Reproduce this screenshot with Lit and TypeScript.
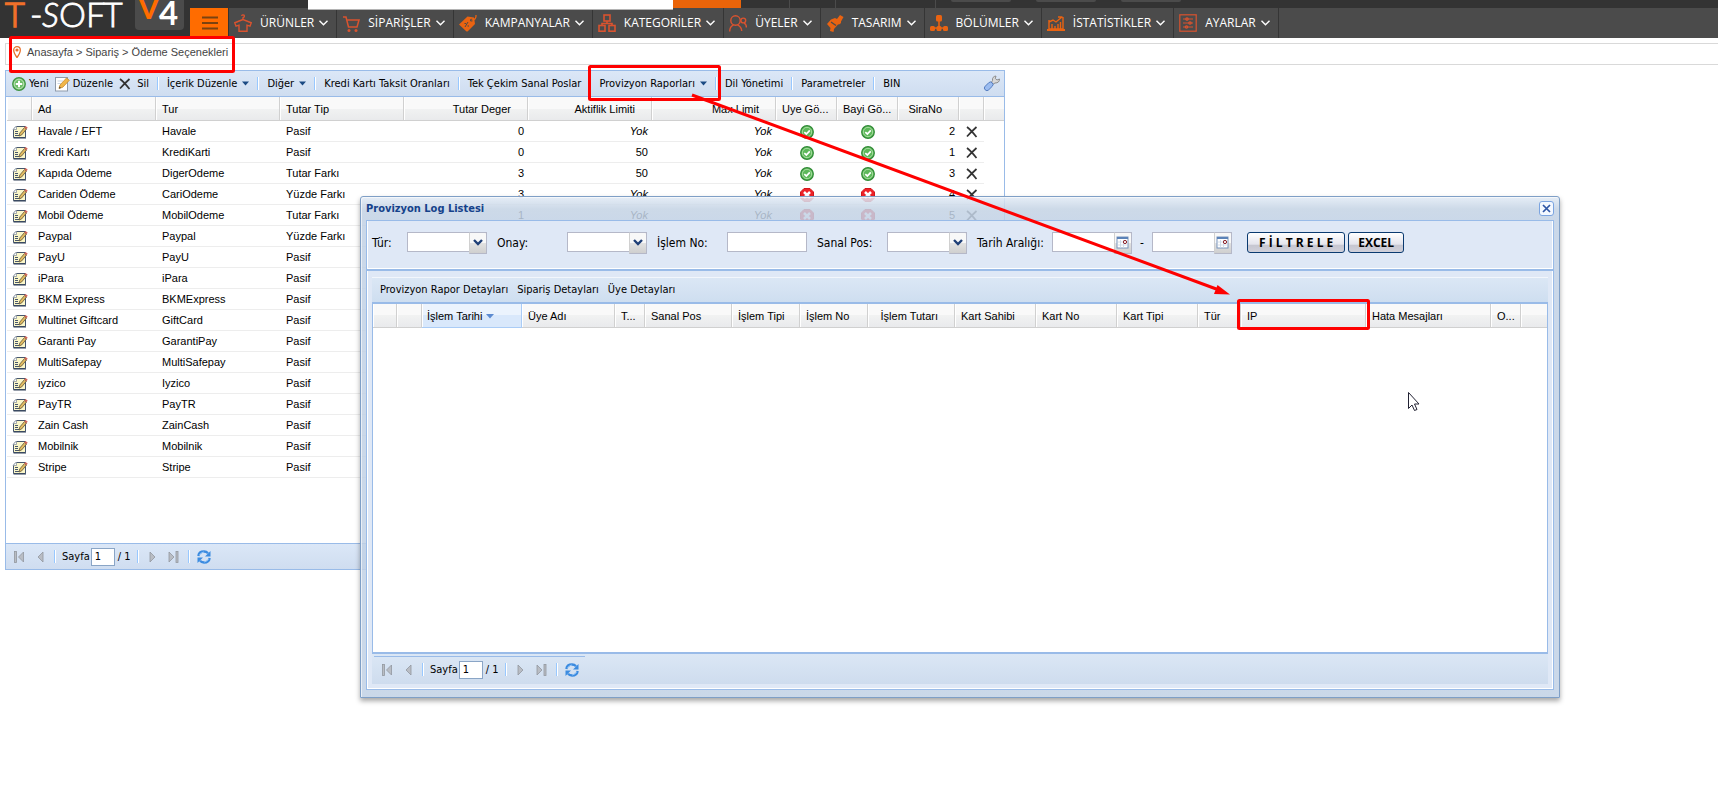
import { LitElement, html, svg, css, nothing } from "lit";
import { customElement } from "lit/decorators.js";

type Row = {
  name: string;
  kind: string;
  fee: string;
  amount?: string;
  minLimit?: string;
  maxLimit?: string;
  visible?: boolean;
  order?: number;
};

const PASSIVE = "Pasif";

const ROWS: Row[] = [
  { name: "Havale / EFT", kind: "Havale", fee: PASSIVE, amount: "0", minLimit: "Yok", maxLimit: "Yok", visible: true, order: 2 },
  { name: "Kredi Kartı", kind: "KrediKarti", fee: PASSIVE, amount: "0", minLimit: "50", maxLimit: "Yok", visible: true, order: 1 },
  { name: "Kapıda Ödeme", kind: "DigerOdeme", fee: "Tutar Farkı", amount: "3", minLimit: "50", maxLimit: "Yok", visible: true, order: 3 },
  { name: "Cariden Ödeme", kind: "CariOdeme", fee: "Yüzde Farkı", amount: "3", minLimit: "Yok", maxLimit: "Yok", visible: false, order: 4 },
  { name: "Mobil Ödeme", kind: "MobilOdeme", fee: "Tutar Farkı", amount: "1", minLimit: "Yok", maxLimit: "Yok", visible: false, order: 5 },
  { name: "Paypal", kind: "Paypal", fee: "Yüzde Farkı" },
  { name: "PayU", kind: "PayU", fee: PASSIVE },
  { name: "iPara", kind: "iPara", fee: PASSIVE },
  { name: "BKM Express", kind: "BKMExpress", fee: PASSIVE },
  { name: "Multinet Giftcard", kind: "GiftCard", fee: PASSIVE },
  { name: "Garanti Pay", kind: "GarantiPay", fee: PASSIVE },
  { name: "MultiSafepay", kind: "MultiSafepay", fee: PASSIVE },
  { name: "iyzico", kind: "Iyzico", fee: PASSIVE },
  { name: "PayTR", kind: "PayTR", fee: PASSIVE },
  { name: "Zain Cash", kind: "ZainCash", fee: PASSIVE },
  { name: "Mobilnik", kind: "Mobilnik", fee: PASSIVE },
  { name: "Stripe", kind: "Stripe", fee: PASSIVE },
];

const LOG_COLUMNS: { label: string; width: number; right?: boolean; sorted?: boolean }[] = [
  { label: "", width: 24 },
  { label: "", width: 25 },
  { label: "İşlem Tarihi", width: 100, sorted: true },
  { label: "Üye Adı", width: 93 },
  { label: "T...", width: 30 },
  { label: "Sanal Pos", width: 87 },
  { label: "İşlem Tipi", width: 68 },
  { label: "İşlem No", width: 68 },
  { label: "İşlem Tutarı", width: 87, right: true },
  { label: "Kart Sahibi", width: 81 },
  { label: "Kart No", width: 81 },
  { label: "Kart Tipi", width: 81 },
  { label: "Tür", width: 43 },
  { label: "IP", width: 125 },
  { label: "Hata Mesajları", width: 125 },
  { label: "O...", width: 30 },
];

const O = "#ea6311";
const R = "#d9532f";

const navIcons = {
  shirt: svg`<g fill="none" stroke=${R} stroke-width="1.4"><path d="M9 6V3.800Q11 3 10 1.200Q8.500.3 7.500 1.800"/><path d="M9 5.500L.8 8.800L2 12.200L5 11.200V17.300H13V11.200L16 12.200L17.200 8.800Z"/></g>`,
  cart: svg`<g fill="none" stroke=${R} stroke-width="1.5"><path d="M1 3 H4 L6.500 13 H15 L17 6 H5.500"/></g><circle cx="7" cy="16.500" r="1.500" fill=${R}/><circle cx="14" cy="16.500" r="1.500" fill=${R}/>`,
  tag: svg`<path fill=${O} d="M0 10.500L8.500 2.500L15 3.500L16 10L9 17Q8 18 7 17Z"/><circle cx="12.500" cy="6.200" r="1.400" fill="#4b4b4b"/><path d="M12.500 6.200Q17.500 6 17 1" stroke=${O} stroke-width="1.300" fill="none"/><path d="M6 13 L9 8 M5.500 9.500h1.500M8.500 12h1.500" stroke="#4b4b4b"/>`,
  boxes: svg`<g fill="none" stroke=${R} stroke-width="1.600"><rect x="6" y="1" width="6" height="6"/><rect x="1" y="11.500" width="6" height="5.700"/><rect x="11" y="11.500" width="6" height="5.700"/><path d="M9 7V9.500M4 11.500V9.500H14V11.500"/></g>`,
  users: svg`<g fill="none" stroke=${R} stroke-width="1.400"><circle cx="6.500" cy="6.500" r="4.700"/><path d="M.7 17.500Q.7 12.500 4.500 10.800M8.500 10.800Q12.500 12.500 12.700 17"/><circle cx="14.300" cy="6.500" r="2.400"/><path d="M15 9Q17.400 10 17.400 13.500"/></g>`,
  brush: svg`<path fill=${O} d="M11 5 L14 1 L17.500 3 L15 7.500 Q15.500 10 12 10.500 L8 15 L7.500 18 L4 17 L4.500 14 L1 10 L5 5.500 L9 4Z"/><path d="M5 8 L10 11.500" stroke="#4b4b4b" stroke-width="1.300"/>`,
  tree: svg`<g fill=${O}><rect x="6" y="1" width="6" height="6.500" rx="1.500"/><rect x="8.200" y="7" width="1.600" height="7"/><rect x="2" y="13.300" width="14" height="1.500"/><rect x="0" y="12" width="5" height="5" rx="1.500"/><rect x="6.500" y="12" width="5" height="5" rx="1.500"/><rect x="13" y="12" width="5" height="5" rx="1.500"/></g>`,
  chart: svg`<g fill="none" stroke=${O} stroke-width="1.400"><path d="M2 6 V15 H16 V3 M2 8 L6 6 L9 8 L15 3 M11 3H15.500"/><path d="M5 15V10M8 15V12M11 15V10M13.500 15V8"/></g><rect x="0" y="15" width="18" height="2" fill=${O}/>`,
  sliders: svg`<g fill="none" stroke=${R} stroke-width="1.200"><rect x=".8" y=".8" width="16.400" height="16.400"/><path d="M4 5H14M4 9H14M4 13H14"/><circle cx="8" cy="5" r="1.200"/><circle cx="11" cy="9" r="1.200"/><circle cx="7.500" cy="13" r="1.200"/></g>`,
};

const NAV: [keyof typeof navIcons, string][] = [
  ["shirt", "ÜRÜNLER"],
  ["cart", "SİPARİŞLER"],
  ["tag", "KAMPANYALAR"],
  ["boxes", "KATEGORİLER"],
  ["users", "ÜYELER"],
  ["brush", "TASARIM"],
  ["tree", "BÖLÜMLER"],
  ["chart", "İSTATİSTİKLER"],
  ["sliders", "AYARLAR"],
];

const editIcon = html`<svg width="16" height="14" viewBox="0 0 16 14"><path d="M4 1.500H13.500V12.500H1.500V4.500Z" fill="#fbf7c8" stroke="#46566e"/><path d="M1.500 13H14" stroke="#2f3e57"/><path d="M1 4.500L4.500 1V4.500Z" fill="#fff" stroke="#7d8896" stroke-width=".7"/><path d="M3 6.500H6M3 8.500H6M3 10.500H7" stroke="#46566e"/><path d="M7 11L7.800 8L12.500 2.500L14.500 4L9.700 9.900Z" fill="#e3bd62" stroke="#5d5238" stroke-width=".8"/><path d="M12.200 2.500L13.500 1L15.700 2.600L14.500 4.200Z" fill="#d0685c"/></svg>`;
const okIcon = html`<svg width="14" height="14" viewBox="0 0 14 14"><circle cx="7" cy="7" r="6.300" fill="#5db85a" stroke="#2f8a35" stroke-width="1.200"/><circle cx="7" cy="7" r="4.700" fill="none" stroke="#a7dda0"/><path d="M4.300 7.200L6.300 9L9.800 5.300" fill="none" stroke="#fff" stroke-width="1.700"/></svg>`;
const noIcon = html`<svg width="14" height="14" viewBox="0 0 14 14"><path d="M4 .5H10L13.500 4V10L10 13.500H4L.5 10V4Z" fill="#ee2228" stroke="#d3161a"/><path d="M4 4L10 10M10 4L4 10" stroke="#fff" stroke-width="2.500"/></svg>`;
const crossIcon = html`<svg width="12" height="12" viewBox="0 0 12 12"><path d="M1 1Q5 4 10.500 11M10.500 1Q6 5 1 10.500" fill="none" stroke="#333" stroke-width="1.700"/></svg>`;
const addIcon = html`<svg width="14" height="14" viewBox="0 0 14 14"><circle cx="7" cy="7" r="6.300" fill="#6fbf6a" stroke="#3f9442" stroke-width="1.200"/><circle cx="7" cy="7" r="4.800" fill="none" stroke="#bfe5ba"/><path d="M7 3.800V10.200M3.800 7H10.200" stroke="#fff" stroke-width="2"/></svg>`;
const noteIcon = html`<svg width="15" height="16" viewBox="0 0 15 16"><rect x=".5" y="1.500" width="12" height="13.500" fill="#fff" stroke="#8f9bab"/><path d="M2.500 5H8M2.500 7.500H6" stroke="#c9d4e2"/><path d="M4 12.500L5 9L11.500 2L14.300 4.300L7.800 11.200Z" fill="#f0b64a" stroke="#c98a2a" stroke-width=".8"/><path d="M4 12.500L4.500 10.600L6 12Z" fill="#444"/></svg>`;
const wrenchIcon = html`<svg width="17" height="17" viewBox="0 0 17 17"><path d="M8 8L9.500 5.500Q9 1.500 13 1L12.300 3.500L14 5L16.500 4Q16.500 8 12 8L9.500 9.500Z" fill="#d8d8d8" stroke="#858585" stroke-width=".9"/><rect x="-5" y="-2.500" width="10" height="5" rx="2.500" transform="translate(5.700 11.300) rotate(-45)" fill="#9bbcf0" stroke="#4f78bd" stroke-width=".9"/></svg>`;
const refreshIcon = html`<svg width="16" height="16" viewBox="0 0 16 16"><path d="M2.300 7Q3 2.500 8 2.500Q10.500 2.500 12 4.200" fill="none" stroke="#3b8be0" stroke-width="2.300"/><path d="M14.500 2V7.500H9Z" fill="#3b8be0"/><path d="M13.700 9Q13 13.500 8 13.500Q5.500 13.500 4 11.800" fill="none" stroke="#3b8be0" stroke-width="2.300"/><path d="M1.500 14V8.500H7Z" fill="#3b8be0"/><path d="M3.500 6Q5 3.200 8 3M12.500 10Q11 12.800 8 13" fill="none" stroke="#a9d2fb" stroke-width=".8"/></svg>`;
const arrowGlyph = (shape: "first" | "prev" | "next" | "last") => {
  const forward = shape === "next" || shape === "last";
  const bar = shape === "first" || shape === "last";
  return html`<svg width="16" height="14" viewBox="0 0 16 14">
    <g fill="#b9bdc4" stroke="#92979f" stroke-width=".8">
      ${forward
        ? svg`<path d=${bar ? "M3 2V12L8 7Z" : "M5 2V12L10 7Z"} />`
        : svg`<path d=${bar ? "M12.500 2V12L7.500 7Z" : "M11 2V12L6 7Z"} />`}
      ${bar ? svg`<rect x=${forward ? 10 : 3.5} y="1.500" width="2" height="11" />` : nothing}
    </g>
  </svg>`;
};
const caret = html`<svg class="caret" width="7" height="5" viewBox="0 0 7 5"><path d="M0 .5H7L3.500 4.500Z" fill="#1b4a83" /></svg>`;

const controls = css`
  * {
    box-sizing: border-box;
  }
  button,
  input,
  select {
    margin: 0;
    font: inherit;
    color: inherit;
  }
  svg {
    display: block;
    flex: none;
  }
`;

const gridStyles = css`
  table {
    width: 100%;
    table-layout: fixed;
    border-collapse: separate;
    border-spacing: 0;
    font: 11px/14px "Liberation Sans", Arial, sans-serif;
    color: #000;
  }
  th {
    height: 24px;
    padding: 0 0 0 6px;
    font-weight: normal;
    text-align: left;
    white-space: nowrap;
    background: linear-gradient(#f9f9f9 0 50%, #f1f2f2 50%, #e9eaec);
    border-right: 1px solid #d0d0d0;
    border-bottom: 1px solid #d0d0d0;
    box-shadow: inset 1px 0 #fff;
  }
  th:last-child {
    border-right: 0;
  }
  th.num {
    padding: 0 16px 0 0;
    text-align: right;
  }
`;

@customElement("page-bar")
class PageBar extends LitElement {
  static styles = [
    controls,
    css`
      :host {
        display: flex;
        align-items: center;
        gap: 5px;
        padding-left: 5px;
        font: 11px/14px "DejaVu Sans Condensed", Tahoma, sans-serif;
        color: #000;
      }
      button {
        padding: 0;
        border: 0;
        background: none;
      }
      .sep {
        width: 2px;
        height: 13px;
        margin: 0 1px;
        border-left: 1px solid #98c8ff;
        border-right: 1px solid #fff;
      }
      label {
        display: flex;
        align-items: center;
        gap: 1px;
      }
      input {
        width: 24px;
        height: 18px;
        padding: 0 3px;
        border: 1px solid #8aa5c6;
        background: #fff;
      }
      .total {
        padding: 0 0 0 2px;
      }
    `,
  ];
  render() {
    return html`
      <button aria-label="İlk">${arrowGlyph("first")}</button>
      <button aria-label="Önceki">${arrowGlyph("prev")}</button>
      <span class="sep"></span>
      <label>Sayfa <input value="1" /><span class="total">/ 1</span></label>
      <span class="sep"></span>
      <button aria-label="Sonraki">${arrowGlyph("next")}</button>
      <button aria-label="Son">${arrowGlyph("last")}</button>
      <span class="sep"></span>
      <button aria-label="Yenile">${refreshIcon}</button>
    `;
  }
}

@customElement("site-header")
class SiteHeader extends LitElement {
  static styles = [
    controls,
    css`
      :host {
        display: flex;
        height: 38px;
        background: #333;
        color: #fff;
        font: 12px/16px "Open Sans", sans-serif;
      }
      .logo {
        flex: none;
        width: 190px;
      }
      .main {
        flex: 1;
        min-width: 0;
      }
      .strip {
        display: flex;
        height: 8px;
        align-items: flex-start;
      }
      .search {
        width: 365px;
        height: 10px;
        margin-left: 118px;
        padding: 0;
        border: 0;
        border-bottom: 1px solid #b4b4b4;
        background: #fff;
        position: relative;
        border-radius: 0;
      }
      .go {
        width: 68px;
        height: 8px;
        padding: 0;
        border: 0;
        background: #ea6409;
      }
      .cell {
        height: 8px;
        border-right: 1px solid #4b4b4b;
      }
      .cell.a {
        width: 49px;
      }
      .cell.b {
        width: 46px;
      }
      .cell.c {
        width: 100px;
      }
      .pill {
        width: 60px;
        height: 2px;
        margin-left: 15px;
        margin-right: 10px;
        border-radius: 0 0 3px 3px;
        background: #4b4b4b;
      }
      nav {
        display: flex;
        height: 30px;
        background: #4b4b4b;
      }
      .menu {
        width: 39px;
        height: 30px;
        padding: 2px 10px 0 12px;
        border: 0;
        border-right: 1px solid #333;
        border-bottom: 2px solid #333;
        background: #ff6c00;
      }
      .item {
        display: flex;
        align-items: center;
        padding: 0 8px 0 5px;
        border-right: 1px solid #353535;
        color: #fff;
        text-decoration: none;
      }
      .item svg:first-child {
        margin-right: 8px;
      }
      .chev {
        margin-left: 5px;
      }
    `,
  ];
  render() {
    return html`
      <svg class="logo" height="38" viewBox="0 0 190 38" role="img" aria-label="T-Soft V4">
        <rect x="135" y="-8" width="49" height="38" rx="4" fill="#4b4b4b" />
        <g font-family="Lato, sans-serif" font-size="34" font-weight="300" fill="#fff" stroke="#fff" stroke-width=".8">
          <text x="5" y="27" fill="#f0702a" stroke="#f0702a" stroke-width="1.500">T</text>
          <text x="30" y="27">-</text>
          <text x="42" y="27" font-style="italic">S</text>
          <text x="59" y="27">O</text>
          <text x="86" y="27">F</text>
          <text x="103" y="27">T</text>
        </g>
        <g font-family="Lato, sans-serif" font-weight="700">
          <text x="138" y="19" font-size="31" fill="#ff6c00">V</text>
          <text x="159" y="25" font-size="33" fill="#fff">4</text>
        </g>
      </svg>
      <div class="main">
        <div class="strip">
          <input class="search" type="search" aria-label="Ara" />
          <button class="go" aria-label="Ara"></button>
          <span class="cell a"></span><span class="cell b"></span><span class="cell c"></span>
          <span class="pill"></span><span class="pill"></span><span class="pill"></span>
        </div>
        <nav>
          <button class="menu" aria-label="Menü">
            <svg width="16" height="14" viewBox="0 0 16 14">
              <path d="M0 1.500H16M0 7H16M0 12.500H16" stroke="#7a4210" stroke-width="2" />
            </svg>
          </button>
          ${NAV.map(
            ([icon, label]) => html`<a class="item" href="#">
              <svg width="18" height="18" viewBox="0 0 18 18">${navIcons[icon]}</svg>
              <span>${label}</span>
              <svg class="chev" width="9" height="6" viewBox="0 0 9 6">
                <path d="M.5 .7L4.500 4.700L8.500 .7" fill="none" stroke="#fff" stroke-width="1.400" />
              </svg>
            </a>`
          )}
        </nav>
      </div>
    `;
  }
}

@customElement("payment-grid")
class PaymentGrid extends LitElement {
  static styles = [
    controls,
    gridStyles,
    css`
      :host {
        display: flex;
        flex-direction: column;
        min-height: 500px;
        border: 1px solid #99bbe8;
        background: #fff;
        font: 11px/14px "DejaVu Sans Condensed", Tahoma, sans-serif;
        color: #000;
      }
      .tools {
        display: flex;
        align-items: center;
        height: 26px;
        padding: 0 4px 0 6px;
        border-bottom: 1px solid #99bbe8;
        background: linear-gradient(#dbe7f7, #cfddf0);
        white-space: nowrap;
      }
      .tools button {
        display: flex;
        align-items: center;
        gap: 4px;
        padding: 0;
        border: 0;
        background: none;
      }
      .tools .plain {
        padding: 0 8px;
      }
      .icons {
        display: flex;
        gap: 6px;
        padding-right: 8px;
      }
      .tools .icons button {
        gap: 3px;
      }
      .caret {
        margin-left: 1px;
      }
      .sep {
        flex: none;
        width: 2px;
        height: 13px;
        border-left: 1px solid #98c8ff;
        border-right: 1px solid #fff;
      }
      .tools .wrench {
        margin-left: auto;
      }
      .body {
        flex: 1;
        padding-left: 1px;
      }
      col.icon {
        width: 25px;
      }
      col.wide {
        width: 124px;
      }
      col.flag {
        width: 61px;
      }
      td {
        height: 21px;
        padding: 0 0 1px 6px;
        border-bottom: 1px solid #ededed;
        white-space: nowrap;
      }
      td:last-child {
        border-bottom: 0;
      }
      td.num {
        padding: 0 4px 1px 0;
        text-align: right;
      }
      td.mid {
        padding: 1px 0 0 5px;
      }
      td.del {
        padding: 1px 0 0 7px;
      }
      td.flag {
        padding: 1px 0 0 24px;
      }
      td button {
        display: block;
        padding: 0;
        border: 0;
        background: none;
      }
      page-bar {
        height: 26px;
        border-top: 1px solid #99bbe8;
        background: linear-gradient(#dbe7f7, #cfddf0);
      }
    `,
  ];

  private limit(value?: string) {
    return value === "Yok" ? html`<i>Yok</i>` : value ?? nothing;
  }

  private flag(value?: boolean) {
    return value === undefined ? nothing : value ? okIcon : noIcon;
  }

  render() {
    const sep = html`<span class="sep"></span>`;
    const plain = (label: string, menu = false) =>
      html`<button class="plain">${label}${menu ? caret : nothing}</button>`;
    return html`
      <div class="tools">
        <div class="icons">
          <button>${addIcon}Yeni</button>
          <button>${noteIcon}Düzenle</button>
          <button>${crossIcon}<span>&nbsp;Sil</span></button>
        </div>
        ${sep}${plain("İçerik Düzenle", true)}${sep}${plain("Diğer", true)}${sep}${plain("Kredi Kartı Taksit Oranları")}
        ${sep}${plain("Tek Çekim Sanal Poslar")}${sep}${plain("Provizyon Raporları", true)}${sep}${plain("Dil Yönetimi")}
        ${sep}${plain("Parametreler")}${sep}${plain("BIN")}
        <button class="wrench" aria-label="Ayarlar">${wrenchIcon}</button>
      </div>
      <div class="body">
        <table>
          <colgroup>
            <col class="icon" />
            <col class="wide" /><col class="wide" /><col class="wide" /><col class="wide" /><col class="wide" /><col class="wide" />
            <col class="flag" /><col class="flag" /><col class="flag" />
            <col class="icon" />
            <col />
          </colgroup>
          <thead>
            <tr>
              <th></th>
              <th>Ad</th>
              <th>Tur</th>
              <th>Tutar Tip</th>
              <th class="num">Tutar Deger</th>
              <th class="num">Aktiflik Limiti</th>
              <th class="num">Max Limit</th>
              <th>Uye Gö...</th>
              <th>Bayi Gö...</th>
              <th class="num">SiraNo</th>
              <th></th>
              <th></th>
            </tr>
          </thead>
          <tbody>
            ${ROWS.map(
              (r) => html`<tr>
                <td class="mid"><button aria-label="Düzenle">${editIcon}</button></td>
                <td>${r.name}</td>
                <td>${r.kind}</td>
                <td>${r.fee}</td>
                <td class="num">${r.amount}</td>
                <td class="num">${this.limit(r.minLimit)}</td>
                <td class="num">${this.limit(r.maxLimit)}</td>
                <td class="flag">${this.flag(r.visible)}</td>
                <td class="flag">${this.flag(r.visible)}</td>
                <td class="num">${r.order}</td>
                <td class="del">${r.order ? html`<button aria-label="Sil">${crossIcon}</button>` : nothing}</td>
                <td></td>
              </tr>`
            )}
          </tbody>
        </table>
      </div>
      <page-bar></page-bar>
    `;
  }
}

@customElement("log-window")
class LogWindow extends LitElement {
  static styles = [
    controls,
    gridStyles,
    css`
      :host {
        display: flex;
        flex-direction: column;
        height: 502px;
        padding: 0 5px 7px;
        border: 1px solid #7f9fc6;
        border-radius: 3px 3px 0 0;
        background: linear-gradient(rgba(225, 234, 245, 0.85), rgba(196, 211, 228, 0.85) 12px, rgba(193, 209, 229, 0.85) 24px);
        box-shadow: 0 3px 5px rgba(0, 0, 0, 0.35), inset 1px 1px rgba(255, 255, 255, 0.6);
        font: 12px/16px "DejaVu Sans Condensed", Tahoma, sans-serif;
        color: #000;
      }
      header {
        display: flex;
        align-items: center;
        justify-content: space-between;
        height: 23px;
      }
      h2 {
        margin: 0;
        font-size: 11px;
        line-height: 14px;
        font-weight: bold;
        color: #15428b;
      }
      .close {
        width: 15px;
        height: 15px;
        padding: 1px;
        border: 1px solid #7ba4e0;
        border-radius: 3px;
        background: #f3f8ff;
      }
      form {
        display: flex;
        align-items: flex-start;
        height: 50px;
        padding: 11px 5px 0;
        border: 1px solid #99bbe8;
        background: #dfe8f6;
        box-shadow: inset -1px -1px #fff, inset 1px 0 #fff;
        white-space: nowrap;
      }
      .label {
        width: 70px;
        padding-top: 3px;
      }
      .label.short {
        width: 35px;
      }
      .label.long {
        width: 75px;
      }
      .field {
        position: relative;
        display: flex;
        width: 80px;
        margin-right: 10px;
      }
      .field input,
      .field select {
        appearance: none;
        width: 80px;
        height: 20px;
        padding: 0 2px;
        border: 1px solid #b5b8c8;
        border-radius: 0;
        background: #fff;
      }
      .trigger {
        position: absolute;
        top: 0;
        right: 0;
        width: 18px;
        height: 22px;
        padding: 0;
        border: 1px solid #b5b8c8;
        border-left-color: #d0d0d0;
        border-radius: 0 2px 0 0;
        background: linear-gradient(#f8f8f8 50%, #e2e2e2 50%, #cfcfcf);
        pointer-events: none;
      }
      .trigger svg {
        margin: 3px 1px;
      }
      .field.date {
        margin-right: 0;
      }
      .dash {
        width: 20px;
        padding-top: 3px;
        text-align: center;
      }
      .actions {
        display: flex;
        gap: 3px;
        margin-left: 15px;
      }
      .actions button {
        height: 21px;
        padding: 0 9px;
        border: 1px solid #0a3a70;
        border-radius: 3px;
        background: linear-gradient(#fff, #e4e4ec 60%, #c6c6d0 62%, #d0d0da);
        font: bold 12px/16px "Open Sans", sans-serif;
      }
      .actions .first {
        padding: 0 11px;
      }
      .panel {
        flex: 1;
        display: flex;
        flex-direction: column;
        padding: 6px 5px 5px;
        border: 1px solid #99bbe8;
        background: #dfe8f6;
        box-shadow: inset 1px 0 #fff, inset -1px -1px #fff;
      }
      .tools {
        display: flex;
        align-items: center;
        gap: 9px;
        height: 25px;
        padding: 0 8px;
        border-top: 1px solid #f2f6fc;
        background: linear-gradient(#dbe7f5, #cedef0);
        font-size: 11px;
        line-height: 14px;
        white-space: nowrap;
      }
      .tools button {
        padding: 0;
        border: 0;
        background: none;
      }
      .grid {
        flex: 1;
        border: 1px solid #99bbe8;
        border-width: 2px 1px;
        background: #fff;
        overflow: hidden;
      }
      th.sorted {
        padding-left: 5px;
        border-color: #aaccf6;
        background: linear-gradient(#ebf3fd 50%, #d9e8fb 50%);
      }
      th svg {
        display: inline-block;
        margin: 0 0 1px 4px;
      }
      .foot {
        height: 30px;
        padding: 2px;
        background: linear-gradient(#dbe7f5, #cedcee);
      }
      page-bar {
        width: 211px;
        height: 26px;
        border-top: 1px solid #99bbe8;
      }
    `,
  ];

  private combo(id: string) {
    return html`<span class="field">
      <select id=${id}></select>
      <span class="trigger">
        <svg width="14" height="12" viewBox="0 0 14 12"><path d="M3 4L7 8L11 4" fill="none" stroke="#1f3f77" stroke-width="2.400" /></svg>
      </span>
    </span>`;
  }

  private date(id: string, label: string) {
    return html`<span class="field date">
      <input id=${id} aria-label=${label} />
      <span class="trigger">
        <svg width="13" height="14" viewBox="0 0 13 14">
          <rect x="1" y="1" width="11" height="11" fill="#fff" stroke="#7894bb" />
          <rect x="1" y="1" width="11" height="2" fill="#5c83b8" />
          <path d="M2 6H8M2 9H11M4.500 4V12M7.500 4V12" stroke="#c8d4e4" stroke-width=".8" />
          <circle cx="9" cy="6" r="1.600" fill="#fff" stroke="#8a1c24" />
        </svg>
      </span>
    </span>`;
  }

  render() {
    return html`
      <header>
        <h2>Provizyon Log Listesi</h2>
        <button class="close" aria-label="Kapat">
          <svg width="11" height="11" viewBox="0 0 11 11"><path d="M2 2L9 9M9 2L2 9" stroke="#2d55a5" stroke-width="1.700" /></svg>
        </button>
      </header>
      <form>
        <label class="label short" for="kind">Tür:</label>${this.combo("kind")}
        <label class="label" for="approval">Onay:</label>${this.combo("approval")}
        <label class="label" for="number">İşlem No:</label><span class="field"><input id="number" /></span>
        <label class="label" for="pos">Sanal Pos:</label>${this.combo("pos")}
        <label class="label long" for="from">Tarih Aralığı:</label>${this.date("from", "Tarih Aralığı")}
        <span class="dash">-</span>${this.date("to", "Tarih Aralığı")}
        <span class="actions">
          <button type="button" class="first">F İ L T R E L E</button>
          <button type="button">EXCEL</button>
        </span>
      </form>
      <div class="panel">
        <div class="tools">
          <button>Provizyon Rapor Detayları</button>
          <button>Sipariş Detayları</button>
          <button>Üye Detayları</button>
        </div>
        <div class="grid">
          <table>
            <colgroup>
              ${LOG_COLUMNS.map((c) => html`<col style="width:${c.width}px" />`)}
              <col />
            </colgroup>
            <thead>
              <tr>
                ${LOG_COLUMNS.map(
                  (c) => html`<th class=${c.right ? "num" : c.sorted ? "sorted" : ""}>${c.label}${c.sorted
                    ? html`<svg width="8" height="5" viewBox="0 0 8 5"><path d="M0 0H8L4 4.500Z" fill="#5c8ad0" /></svg>`
                    : nothing}</th>`
                )}
                <th></th>
              </tr>
            </thead>
          </table>
        </div>
        <div class="foot"><page-bar></page-bar></div>
      </div>
    `;
  }
}

@customElement("app-root")
class AppRoot extends LitElement {
  static styles = [
    controls,
    css`
      :host {
        display: block;
        position: relative;
        min-height: 100vh;
        overflow: hidden;
        background: #fff;
      }
      .crumbs {
        display: flex;
        align-items: center;
        gap: 6px;
        height: 22px;
        margin: 5px 0 5px 5px;
        padding: 0 0 4px 7px;
        border: 1px solid #d9d9d9;
        border-right: 0;
        font: 11px/14px "Liberation Sans", Arial, sans-serif;
        color: #444;
      }
      .crumbs a {
        color: inherit;
        text-decoration: none;
      }
      .layout {
        display: grid;
        grid-template-columns: minmax(0, 1000px);
        padding-left: 5px;
      }
      log-window {
        position: absolute;
        top: 196px;
        left: 360px;
        right: 158px;
      }
      .marks {
        position: absolute;
        top: 0;
        left: 0;
        pointer-events: none;
      }
    `,
  ];
  render() {
    return html`
      <site-header></site-header>
      <div class="crumbs">
        <svg width="8" height="12" viewBox="0 0 8 12">
          <path d="M4 11.500Q.7 7 .7 4A3.300 3.300 0 0 1 7.300 4Q7.300 7 4 11.500Z" fill="#fff" stroke="#e8702a" stroke-width="1.300" />
          <circle cx="4" cy="4" r="1.600" fill="#e8702a" />
        </svg>
        <span><a href="#">Anasayfa</a> &gt; <a href="#">Sipariş</a> &gt; <a href="#">Ödeme Seçenekleri</a></span>
      </div>
      <div class="layout"><payment-grid></payment-grid></div>
      <log-window></log-window>
      <svg class="marks" width="1718" height="793" viewBox="0 0 1718 793" aria-hidden="true">
        <g fill="none" stroke="#fe0000" stroke-width="3">
          <rect x="10.500" y="37.500" width="223" height="34" rx="1" />
          <rect x="589.500" y="66.500" width="130" height="33" rx="1" />
          <rect x="1238.500" y="300.500" width="130" height="28" rx="1" />
          <path d="M692 95L1219 290" />
        </g>
        <path d="M1230 294.500L1214 294L1217.500 285Z" fill="#fe0000" />
        <path d="M1408.500 392.500V408.500L1412 405L1414.500 410.500L1417 409.500L1414.500 404H1419Z" fill="#fff" stroke="#223" />
      </svg>
    `;
  }
}
